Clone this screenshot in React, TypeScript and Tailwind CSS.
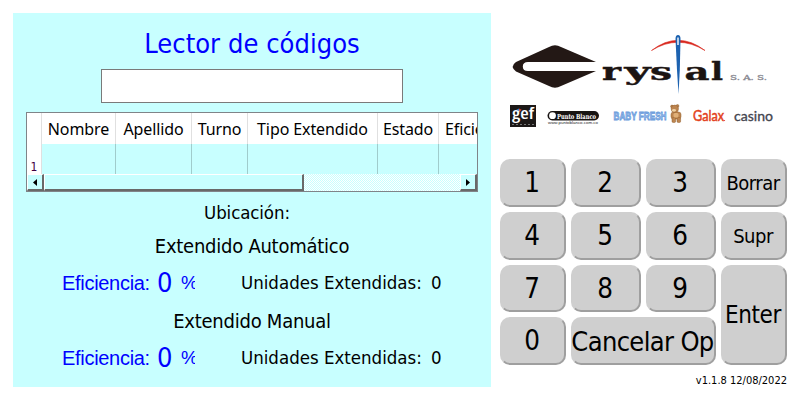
import type { ReactNode } from "react";

const HEADERS: { label: string; cls: string }[] = [
  { label: "Nombre", cls: "w-[74px]" },
  { label: "Apellido", cls: "w-[76px]" },
  { label: "Turno", cls: "w-[56px]" },
  { label: "Tipo Extendido", cls: "w-[130px]" },
  { label: "Estado", cls: "w-[61px]" },
];

function Key({ children, className = "" }: { children: ReactNode; className?: string }) {
  return (
    <button
      className={`flex items-center justify-center whitespace-nowrap rounded-[10px] border-2 border-t-[#cfcfcf] border-l-[#cfcfcf] border-r-[#9f9f9f] border-b-[#9f9f9f] bg-[#cfcfcf] pr-[2px] leading-none text-black ${className}`}
    >
      {children}
    </button>
  );
}

function ScrollButton({ left }: { left?: boolean }) {
  return (
    <div className="flex h-[17px] w-[17px] shrink-0 items-center justify-center border-t border-l border-r-2 border-b-2 border-t-white border-l-white border-r-[#696969] border-b-[#696969] bg-[#c8ffff]">
      <svg width="4" height="7" viewBox="0 0 4 7">
        <path d={left ? "M4 0V7L0 3.5Z" : "M0 0V7L4 3.5Z"} fill="#000" />
      </svg>
    </div>
  );
}

function Table() {
  return (
    <div className="mx-auto mt-[9px] flex h-[80px] w-[452px] flex-col overflow-hidden border border-[#808488] bg-[#c8ffff]">
      <div className="flex h-[61px] shrink-0">
        <div className="flex w-[15px] shrink-0 items-end justify-center border-r border-[#e0e0e0] bg-white text-[12px] leading-[14px] text-[#400040]">
          1
        </div>
        <div className="flex-1 overflow-hidden">
          <div className="flex h-[31px] w-[520px] bg-white font-['Noto_Sans',sans-serif] text-[16px] leading-[32px] tracking-[-0.1px] [font-stretch:normal]">
            {HEADERS.map((h) => (
              <div key={h.label} className={`${h.cls} shrink-0 border-r border-[#e0e0e0] text-center whitespace-nowrap`}>
                {h.label}
              </div>
            ))}
            <div className="pl-[6px]">Eficiencia</div>
          </div>
          <div className="flex h-[30px] w-[520px]">
            {HEADERS.map((h) => (
              <div key={h.label} className={`${h.cls} shrink-0 border-r border-[#a0cccc]`} />
            ))}
          </div>
        </div>
      </div>
      <div className="flex h-[17px] bg-[#e6fdfd]">
        <ScrollButton left />
        <div className="h-[17px] w-[260px] border-t border-l border-r-2 border-b-2 border-t-white border-l-white border-r-[#696969] border-b-[#696969] bg-[#c8ffff]" />
        <svg className="h-[17px] flex-1" shapeRendering="crispEdges">
          <defs>
            <pattern id="track" width="2" height="2" patternUnits="userSpaceOnUse">
              <rect width="2" height="2" fill="#fff" />
              <rect width="1" height="1" fill="#c8ffff" />
              <rect x="1" y="1" width="1" height="1" fill="#c8ffff" />
            </pattern>
          </defs>
          <rect width="100%" height="100%" fill="url(#track)" />
        </svg>
        <ScrollButton />
      </div>
    </div>
  );
}

function Stats() {
  return (
    <div className="flex h-[38px] items-center whitespace-nowrap pl-[49px] leading-[38px]">
      <div className="w-[95px] shrink-0 font-['Liberation_Sans',sans-serif] text-[20px] tracking-[-0.3px] text-[#0000ff]">Eficiencia:</div>
      <div className="w-[24px] shrink-0 text-[27px] text-[#0000ff]">0</div>
      <div className="w-[14px] shrink-0 overflow-hidden font-['Liberation_Sans',sans-serif] text-[19px] text-[#0000ff]">%</div>
      <div className="ml-[46px] w-[190px] shrink-0 text-[18.5px]">Unidades Extendidas:</div>
      <div className="text-[18.5px]">0</div>
    </div>
  );
}

function Logo() {
  return (
    <svg width="290" height="100" viewBox="505 30 290 100" className="block">
      <path d="M549 47Q555 43.500 561 47L596 62H528Q522.800 62 522.800 66.500T528 71H596L561 86Q555 89.500 549 86L516 71.500Q509.500 66.500 516 62Z" fill="#231815" />
      <g fontFamily="'DejaVu Serif', serif" fontWeight="700" fontSize="24" fill="#1b1412" stroke="#1b1412" strokeWidth="0.400" className="[font-stretch:normal]">
        <text x="602" y="80" textLength="19" lengthAdjust="spacingAndGlyphs">r</text>
        <text x="624.500" y="80" textLength="26" lengthAdjust="spacingAndGlyphs">y</text>
        <text x="650" y="80" textLength="22" lengthAdjust="spacingAndGlyphs">s</text>
        <text x="684.500" y="80" textLength="25" lengthAdjust="spacingAndGlyphs">a</text>
        <text x="711" y="80" textLength="12" lengthAdjust="spacingAndGlyphs">l</text>
      </g>
      <path d="M651.500 50.500Q678 30 705 50.500Q678 34 651.500 50.500Z" fill="#d8261c" stroke="#d8261c" strokeWidth="0.600" />
      <path d="M675.500 39Q675.500 35 678 35T680.500 39L679.800 70L678.500 94L677 70Z" fill="#1c62b0" />
      <path d="M678 37.500V45" stroke="#fff" strokeWidth="1.400" />
      <text x="730" y="80" textLength="37" lengthAdjust="spacingAndGlyphs" fontFamily="'DejaVu Serif', serif" fontSize="8" fill="#888890" stroke="#888890" strokeWidth="0.300">S. A. S.</text>

      <rect x="510" y="105" width="26" height="22" fill="#1c1817" />
      <text x="512" y="119" textLength="22" lengthAdjust="spacingAndGlyphs" fontFamily="'Open Sans', sans-serif" fontWeight="600" fontSize="16" fill="#fff">gef</text>
      <path d="M516 110L519 108.500V111Z" fill="#3488d0" />
      <path d="M519 108.500L522 110L519 111Z" fill="#e44030" />
      <path d="M512 124.500H534" stroke="#777" strokeWidth="1" strokeDasharray="2 2" />

      <rect x="547.500" y="111" width="51.500" height="9.500" rx="4.750" fill="#171312" />
      <circle cx="552.500" cy="115.700" r="3.400" fill="#fff" />
      <text x="557" y="118.500" textLength="39" lengthAdjust="spacingAndGlyphs" fontFamily="'DejaVu Serif', serif" fontWeight="700" fontSize="7" fill="#fff">Punto Blanco</text>
      <text x="548" y="124" textLength="50" lengthAdjust="spacingAndGlyphs" fontFamily="'Liberation Sans', sans-serif" fontSize="3.500" fill="#222">www.puntoblanco.com.co</text>

      <text x="613.500" y="119.500" textLength="53" lengthAdjust="spacingAndGlyphs" fontFamily="'Liberation Sans', sans-serif" fontWeight="700" fontSize="11" fill="#a5c8f0" stroke="#6798da" strokeWidth="0.800">BABY FRESH</text>
      <g fill="#bd8550" stroke="#93602f" strokeWidth="0.500">
        <circle cx="672" cy="106.500" r="1.400" />
        <circle cx="677.500" cy="106" r="1.400" />
        <rect x="671" y="112" width="10" height="7" rx="2.500" />
        <rect x="672" y="117.500" width="3.600" height="5" rx="1.200" />
        <rect x="677" y="117.500" width="3.600" height="5" rx="1.200" />
        <circle cx="674.800" cy="108.800" r="3.700" />
      </g>
      <ellipse cx="674" cy="110.300" rx="2" ry="1.400" fill="#efd2a5" />
      <rect x="673.500" y="113" width="5" height="4.500" rx="1.500" fill="#e0b078" />

      <text x="693" y="121" textLength="31" lengthAdjust="spacingAndGlyphs" fontFamily="Lato, sans-serif" fontSize="15" fill="#e34120" stroke="#e34120" strokeWidth="0.500">Galax</text>
      <circle cx="724.500" cy="120.500" r="0.600" fill="#e34120" />
      <text x="734" y="120.500" textLength="39" lengthAdjust="spacingAndGlyphs" fontFamily="Lato, sans-serif" fontSize="13" fill="#44454f" stroke="#44454f" strokeWidth="0.300">casino</text>
    </svg>
  );
}

export default function App() {
  return (
    <div className="flex h-[400px] w-[800px] overflow-hidden bg-white pt-[13px] pl-[13px] font-['DejaVu_Sans_Condensed','DejaVu_Sans',sans-serif] text-black [font-stretch:condensed]">
      <section className="h-[374px] w-[478px] shrink-0 bg-[#c8ffff]">
        <h1 className="h-[56px] pt-[12px] text-center text-[27px] leading-[38px] tracking-[0.05px] text-[#0000ff]">Lector de códigos</h1>
        <input className="mx-auto block h-[34px] w-[302px] border border-[#7a7a7a] bg-white px-2 outline-none" />
        <Table />
        <div className="mt-[7px] h-[28px] pr-[10px] text-center text-[18.5px] leading-[28px] tracking-[-0.1px]">Ubicación:</div>
        <div className="mt-[1px] h-[36px] text-center text-[20px] leading-[36px] tracking-[-0.25px]">Extendido Automático</div>
        <Stats />
        <div className="h-[37px] text-center text-[20px] leading-[38px] tracking-[-0.25px]">Extendido Manual</div>
        <Stats />
      </section>
      <section className="ml-[9px] w-[287px] shrink-0">
        <div className="mt-[17px] ml-[5px] w-[282px] overflow-hidden">
          <Logo />
        </div>
        <div className="mt-[29px] grid grid-cols-[66px_70px_70px_66px] grid-rows-[48px_48px_47px_48px] gap-[5px] text-[27.5px]">
          <Key>1</Key>
          <Key>2</Key>
          <Key>3</Key>
          <Key className="text-[20px] tracking-[-0.5px]">Borrar</Key>
          <Key>4</Key>
          <Key>5</Key>
          <Key>6</Key>
          <Key className="text-[20px] tracking-[-0.5px]">Supr</Key>
          <Key>7</Key>
          <Key>8</Key>
          <Key>9</Key>
          <Key className="row-span-2 text-[24px] tracking-[-0.4px]">Enter</Key>
          <Key>0</Key>
          <Key className="col-span-2 text-[27px] tracking-[-0.65px]">Cancelar Op</Key>
        </div>
        <div className="mt-[8px] text-right text-[11px] leading-[16px]">v1.1.8 12/08/2022</div>
      </section>
    </div>
  );
}
